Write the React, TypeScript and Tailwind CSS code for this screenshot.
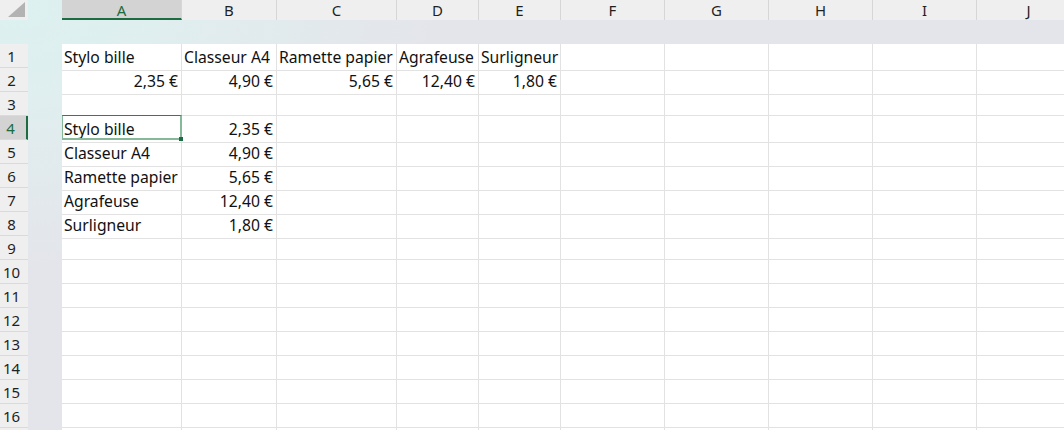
import React from "react";

const cols = [
  { l: "A", w: 120 },
  { l: "B", w: 95 },
  { l: "C", w: 120 },
  { l: "D", w: 82 },
  { l: "E", w: 82 },
  { l: "F", w: 104 },
  { l: "G", w: 104 },
  { l: "H", w: 104 },
  { l: "I", w: 104 },
  { l: "J", w: 104 },
];

type Cell = { t: string; r?: boolean };
const data: Record<number, Record<number, Cell>> = {
  1: {
    0: { t: "Stylo bille" },
    1: { t: "Classeur A4" },
    2: { t: "Ramette papier" },
    3: { t: "Agrafeuse" },
    4: { t: "Surligneur" },
  },
  2: {
    0: { t: "2,35 €", r: true },
    1: { t: "4,90 €", r: true },
    2: { t: "5,65 €", r: true },
    3: { t: "12,40 €", r: true },
    4: { t: "1,80 €", r: true },
  },
  4: { 0: { t: "Stylo bille" }, 1: { t: "2,35 €", r: true } },
  5: { 0: { t: "Classeur A4" }, 1: { t: "4,90 €", r: true } },
  6: { 0: { t: "Ramette papier" }, 1: { t: "5,65 €", r: true } },
  7: { 0: { t: "Agrafeuse" }, 1: { t: "12,40 €", r: true } },
  8: { 0: { t: "Surligneur" }, 1: { t: "1,80 €", r: true } },
};

const rows = Array.from({ length: 17 }, (_, i) => i + 1);
const colTemplate = cols.map((c) => `${c.w}px`).join(" ");

export default function App() {
  return (
    <div
      className="w-[1064px] h-[430px] overflow-hidden grid grid-cols-[28px_34px_1fr] grid-rows-[20px_24px_1fr] text-[15.7px] text-[#111]"
      style={{
        fontFamily: '"Noto Sans", "Open Sans", sans-serif',
        background:
          "radial-gradient(ellipse 420px 260px at 20px 10px, #dcf1f0 0%, #e0eeef 35%, #e4e5ea 100%)",
      }}
    >
      {/* corner */}
      <div className="bg-[#efefef] relative">
        <svg width="28" height="20" className="absolute inset-0">
          <polygon points="8,17 25,17 25,2" fill="#b3b3b3" />
        </svg>
      </div>
      <div />
      {/* column headers */}
      <div className="flex bg-[#efefef] overflow-hidden text-[15px]">
        {cols.map((c, i) => (
          <div
            key={c.l}
            style={{ width: c.w }}
            className={
              "shrink-0 h-[20px] flex items-center justify-center border-r border-[#d6d6d6] leading-none " +
              (i === 0
                ? "bg-[#d3d3d3] text-[#1d6b40] border-b-2 border-b-[#1d6b40] pt-[2px]"
                : "text-[#1f1f1f]")
            }
          >
            {c.l}
          </div>
        ))}
      </div>
      {/* band row */}
      <div />
      <div />
      <div />
      {/* row headers */}
      <div className="flex flex-col bg-[#efefef] overflow-hidden text-[15px]">
        {rows.map((r) => (
          <div
            key={r}
            className={
              "h-[24px] shrink-0 flex items-center justify-center pr-[5px] pt-[1px] border-b border-[#dadada] " +
              (r === 4
                ? "bg-[#d3d3d3] text-[#1d6b40] border-r-2 border-r-[#1d6b40]"
                : "text-[#1f1f1f]")
            }
          >
            {r <= 16 ? r : ""}
          </div>
        ))}
      </div>
      <div />
      {/* grid */}
      <div className="bg-white overflow-hidden relative">
        {rows.map((r) => (
          <div
            key={r}
            className="grid h-[24px]"
            style={{ gridTemplateColumns: colTemplate }}
          >
            {cols.map((c, ci) => {
              const cell = data[r]?.[ci];
              return (
                <div
                  key={c.l}
                  className={
                    "border-r border-b border-[#e2e2e2] flex items-center whitespace-nowrap overflow-visible px-[2px] pt-[2px] " +
                    (cell?.r ? "justify-end pr-[3px]" : "justify-start")
                  }
                >
                  {cell ? cell.t : ""}
                </div>
              );
            })}
          </div>
        ))}
        {/* selection on A4 */}
        <div className="absolute left-[-1px] top-[71px] w-[121px] h-[25px] border-2 border-[#86b99a] border-t-[#2f7d50] border-t-[1px] pointer-events-none">
          <div className="absolute right-[-3px] bottom-[-3px] w-[4px] h-[4px] bg-[#1d6b40]" />
        </div>
      </div>
    </div>
  );
}
